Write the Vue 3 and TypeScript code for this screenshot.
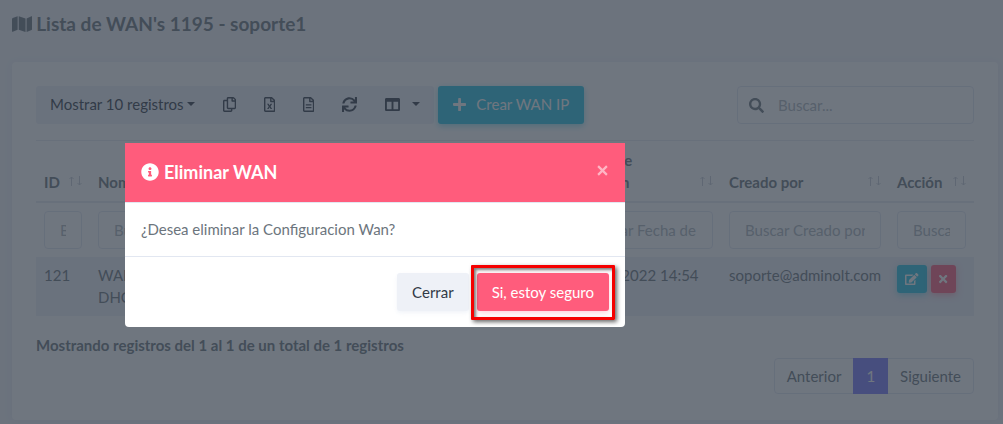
<script setup lang="ts">
import { ref } from 'vue'

interface Column {
  key: string
  label: string
  placeholder: string
}

const columns: Column[] = [
  { key: 'id', label: 'ID', placeholder: 'Buscar ID' },
  { key: 'name', label: 'Nombre', placeholder: 'Buscar Nombre' },
  { key: 'date', label: 'Fecha de creación', placeholder: 'Buscar Fecha de' },
  { key: 'author', label: 'Creado por', placeholder: 'Buscar Creado por' },
  { key: 'action', label: 'Acción', placeholder: 'Buscar Acción' },
]

const search = ref('')
const open = ref(true)

const filePath =
  'M369.9 97.9L286 14C277 5 264.8-.1 252.1-.1H48C21.5 0 0 21.5 0 48v416c0 26.5 21.5 48 48 48h288c26.5 0 48-21.5 48-48V131.9c0-12.7-5.1-25-14.1-34zM332.1 128H256V51.9l76.1 76.1zM48 464V48h160v104c0 13.3 10.7 24 24 24h104v288H48z'
const timesPath =
  'M242.72 256l100.07-100.07c12.28-12.28 12.28-32.19 0-44.48l-22.24-22.24c-12.28-12.28-32.19-12.28-44.48 0L176 189.28 75.93 89.21c-12.28-12.28-32.19-12.28-44.48 0L9.21 111.45c-12.28 12.28-12.28 32.19 0 44.48L109.28 256 9.21 356.07c-12.28 12.28-12.28 32.19 0 44.48l22.24 22.24c12.28 12.28 32.2 12.28 44.48 0L176 322.72l100.07 100.07c12.28 12.28 32.2 12.28 44.48 0l22.24-22.24c12.28-12.28 12.28-32.19 0-44.48L242.72 256z'
</script>

<template>
  <div class="page">
    <main class="content">
      <h1 class="title">
        <svg class="i18" viewBox="0 0 576 512" aria-hidden="true"><path d="M0 117.66v346.32c0 11.32 11.43 19.06 21.94 14.86L160 416V32L20.12 87.95A32.006 32.006 0 0 0 0 117.66zM192 416l192 64V96L192 32v384zM554.06 33.16L416 96v384l139.88-55.95A31.996 31.996 0 0 0 576 394.34V48.02c0-11.32-11.43-19.06-21.94-14.86z" /></svg>
        Lista de WAN's 1195 - soporte1
      </h1>

      <section class="card">
        <div class="toolbar">
          <div class="group">
            <button type="button" class="tool">Mostrar 10 registros<span class="caret"></span></button>
            <button type="button" class="tool" aria-label="Copiar">
              <svg class="i15" viewBox="0 0 448 512"><path d="M433.941 65.941l-51.882-51.882A48 48 0 0 0 348.118 0H176c-26.51 0-48 21.49-48 48v48H48c-26.51 0-48 21.49-48 48v320c0 26.51 21.49 48 48 48h224c26.51 0 48-21.49 48-48v-48h80c26.51 0 48-21.49 48-48V99.882a48 48 0 0 0-14.059-33.941zM266 464H54a6 6 0 0 1-6-6V150a6 6 0 0 1 6-6h74v224c0 26.51 21.49 48 48 48h96v42a6 6 0 0 1-6 6zm128-96H182a6 6 0 0 1-6-6V54a6 6 0 0 1 6-6h106v88c0 13.255 10.745 24 24 24h88v202a6 6 0 0 1-6 6zm6-256h-64V48h9.632c1.591 0 3.117.632 4.243 1.757l48.368 48.368a6 6 0 0 1 1.757 4.243V112z" /></svg>
            </button>
            <button type="button" class="tool" aria-label="Exportar a Excel">
              <svg class="i15" viewBox="0 0 384 512"><path :d="filePath" /><path d="M104 232h56l32 56 32-56h56l-58 88 58 88h-56l-32-56-32 56h-56l58-88z" /></svg>
            </button>
            <button type="button" class="tool" aria-label="Exportar a CSV">
              <svg class="i15" viewBox="0 0 384 512"><path :d="filePath" /><path d="M96 248h192v40H96zM96 344h192v40H96z" /></svg>
            </button>
            <button type="button" class="tool" aria-label="Recargar">
              <svg class="i15" viewBox="0 0 512 512"><path d="M440.65 12.57l4 82.77A247.16 247.16 0 0 0 255.83 8C134.73 8 33.91 94.92 12.29 209.82A12 12 0 0 0 24.09 224h49.05a12 12 0 0 0 11.67-9.26 175.91 175.91 0 0 1 317-56.94l-101.46-4.86a12 12 0 0 0-12.57 12v47.41a12 12 0 0 0 12 12H500a12 12 0 0 0 12-12V12a12 12 0 0 0-12-12h-47.37a12 12 0 0 0-11.98 12.57zM255.83 432a175.61 175.61 0 0 1-146-77.8l101.8 4.87a12 12 0 0 0 12.57-12v-47.4a12 12 0 0 0-12-12H12a12 12 0 0 0-12 12V500a12 12 0 0 0 12 12h47.35a12 12 0 0 0 12-12.6l-4.15-82.57A247.17 247.17 0 0 0 255.83 504c121.11 0 221.93-86.92 243.55-201.82a12 12 0 0 0-11.8-14.18h-49.05a12 12 0 0 0-11.67 9.26A175.86 175.86 0 0 1 255.83 432z" /></svg>
            </button>
            <button type="button" class="tool wide" aria-label="Columnas">
              <svg class="i15" viewBox="0 0 512 512"><path d="M464 32H48C21.49 32 0 53.49 0 80v352c0 26.51 21.49 48 48 48h416c26.51 0 48-21.49 48-48V80c0-26.51-21.49-48-48-48zM224 416H64V160h160v256zm224 0H288V160h160v256z" /></svg>
              <span class="caret"></span>
            </button>
          </div>
          <button type="button" class="create">
            <svg class="i15" viewBox="0 0 448 512"><path d="M416 208H272V64c0-17.67-14.33-32-32-32h-32c-17.67 0-32 14.33-32 32v144H32c-17.67 0-32 14.33-32 32v32c0 17.67 14.33 32 32 32h144v144c0 17.67 14.33 32 32 32h32c17.67 0 32-14.33 32-32V304h144c17.67 0 32-14.33 32-32v-32c0-17.67-14.33-32-32-32z" /></svg>
            Crear WAN IP
          </button>
          <label class="search">
            <svg class="i15" viewBox="0 0 512 512" aria-hidden="true"><path d="M505 442.7L405.3 343c-4.5-4.5-10.6-7-17-7H372c27.6-35.3 44-79.7 44-128C416 93.1 322.9 0 208 0S0 93.1 0 208s93.1 208 208 208c48.3 0 92.7-16.4 128-44v16.3c0 6.4 2.5 12.5 7 17l99.7 99.7c9.4 9.4 24.6 9.4 33.9 0l28.3-28.3c9.4-9.4 9.4-24.6.1-34zM208 336c-70.7 0-128-57.2-128-128 0-70.7 57.2-128 128-128 70.7 0 128 57.2 128 128 0 70.7-57.2 128-128 128z" /></svg>
            <input v-model="search" type="text" placeholder="Buscar..." aria-label="Buscar" />
          </label>
        </div>

        <table class="grid">
          <colgroup>
            <col v-for="c in columns" :key="c.key" :class="'col-' + c.key" />
          </colgroup>
          <thead>
            <tr class="heads">
              <th v-for="c in columns" :key="c.key" scope="col">
                <div class="head">
                  <span :class="'label-' + c.key">{{ c.label }}</span>
                  <svg class="sort" viewBox="0 0 14 10" aria-hidden="true"><path d="M3.5 10V1M1.5 3l2-2 2 2M11.5 0v9M9.5 7l2 2 2-2" /></svg>
                </div>
              </th>
            </tr>
            <tr class="filters">
              <td v-for="c in columns" :key="c.key">
                <input type="text" :placeholder="c.placeholder" :aria-label="c.placeholder" />
              </td>
            </tr>
          </thead>
          <tbody>
            <tr>
              <td>121</td>
              <td><div class="name">WAN DHCP</div></td>
              <td>17/03/2022 14:54</td>
              <td>soporte@adminolt.com</td>
              <td>
                <div class="actions">
                  <button type="button" class="edit" aria-label="Editar">
                    <svg class="i12" viewBox="0 0 576 512"><path d="M402.6 83.2l90.2 90.2c3.8 3.8 3.8 10 0 13.8L274.4 405.6l-92.8 10.3c-12.4 1.4-22.9-9.1-21.5-21.5l10.3-92.8L388.8 83.2c3.8-3.8 10-3.8 13.8 0zm162-22.9l-48.8-48.8c-15.2-15.2-39.9-15.2-55.2 0l-35.4 35.4c-3.8 3.8-3.8 10 0 13.8l90.2 90.2c3.8 3.8 10 3.8 13.8 0l35.4-35.4c15.2-15.3 15.2-40 0-55.2zM384 346.2V448H64V128h229.8c3.2 0 6.2-1.3 8.5-3.5l40-40c7.6-7.6 2.2-20.5-8.5-20.5H48C21.5 64 0 85.5 0 112v352c0 26.5 21.5 48 48 48h352c26.5 0 48-21.5 48-48V306.2c0-10.7-12.9-16-20.5-8.5l-40 40c-2.2 2.3-3.5 5.3-3.5 8.5z" /></svg>
                  </button>
                  <button type="button" class="delete" aria-label="Eliminar">
                    <svg class="i12" viewBox="0 0 352 512"><path :d="timesPath" /></svg>
                  </button>
                </div>
              </td>
            </tr>
          </tbody>
        </table>

        <p class="info">Mostrando registros del 1 al 1 de un total de 1 registros</p>
        <nav class="pager" aria-label="Paginación">
          <a href="#">Anterior</a>
          <a href="#" class="current" aria-current="page">1</a>
          <a href="#">Siguiente</a>
        </nav>
      </section>
    </main>

    <div v-if="open" class="backdrop">
      <div class="modal" role="dialog" aria-modal="true" aria-labelledby="modal-title">
        <header class="modal-head">
          <svg class="i18" viewBox="0 0 512 512" aria-hidden="true"><path d="M256 8C119.043 8 8 119.083 8 256c0 136.997 111.043 248 248 248s248-111.003 248-248C504 119.083 392.957 8 256 8zm0 110c23.196 0 42 18.804 42 42s-18.804 42-42 42-42-18.804-42-42 18.804-42 42-42zm56 254c0 6.627-5.373 12-12 12h-88c-6.627 0-12-5.373-12-12v-24c0-6.627 5.373-12 12-12h12v-64h-12c-6.627 0-12-5.373-12-12v-24c0-6.627 5.373-12 12-12h64c6.627 0 12 5.373 12 12v100h12c6.627 0 12 5.373 12 12v24z" /></svg>
          <h2 id="modal-title">Eliminar WAN</h2>
          <button type="button" class="close" aria-label="Cerrar ventana" @click="open = false">
            <svg viewBox="0 0 10 10"><path d="M1 1l8 8M9 1L1 9" /></svg>
          </button>
        </header>
        <p class="modal-body">¿Desea eliminar la Configuracion Wan?</p>
        <footer class="modal-foot">
          <button type="button" class="cancel" @click="open = false">Cerrar</button>
          <button type="button" class="confirm">Si, estoy seguro</button>
        </footer>
      </div>
    </div>
  </div>
</template>

<style>
body {
  margin: 0;
}
</style>

<style scoped>
.page,
.page * {
  box-sizing: border-box;
}
.page {
  position: relative;
  min-height: 100vh;
  padding: 0 5px 4px 12px;
  background: #f3f4f9;
  color: #6c757d;
  font: 15px/22px Lato, 'Open Sans', sans-serif;
}
button,
input {
  font: inherit;
  color: inherit;
}
button {
  border: 0;
  padding: 0;
  background: none;
  cursor: pointer;
}
svg {
  display: block;
  flex: none;
  fill: currentColor;
}
.i15 {
  height: 15px;
}
.i12 {
  height: 12px;
}
.i18 {
  height: 18px;
}
.title {
  display: flex;
  align-items: center;
  gap: 4px;
  height: 62px;
  margin: 0;
  padding-bottom: 14px;
  font-size: 19px;
  font-weight: 700;
}
.card {
  padding: 24px 24px 26px;
  border-radius: 4px;
  background: #fff;
  box-shadow: 0 1px 10px rgba(60, 70, 130, 0.06);
}
.toolbar {
  display: flex;
  align-items: center;
  gap: 4px;
  margin-bottom: 16px;
}
.group {
  display: flex;
  height: 38px;
  border-radius: 3px;
  background: #eef0f8;
  color: #323a46;
}
.tool {
  display: flex;
  align-items: center;
  padding: 0 14px 2px;
}
.wide {
  gap: 9px;
}
.caret {
  margin-left: 3px;
  border: 4px solid transparent;
  border-top-color: currentColor;
  border-bottom: 0;
}
.create {
  display: flex;
  align-items: center;
  gap: 10px;
  height: 38px;
  padding: 0 15px 2px;
  border-radius: 3px;
  background: #25c2e3;
  color: #fff;
  box-shadow: 0 2px 6px rgba(37, 194, 227, 0.5);
}
.search {
  display: flex;
  align-items: center;
  gap: 14px;
  width: 237px;
  height: 38px;
  margin-left: auto;
  padding: 0 11px;
  border: 1px solid #e2e7f1;
  border-radius: 4px;
}
.search input {
  flex: 1;
  min-width: 0;
  padding: 0;
  border: 0;
  background: none;
  outline: 0;
}
input::placeholder {
  color: #adb5bd;
  opacity: 1;
}
.grid {
  width: 100%;
  table-layout: fixed;
  border-collapse: separate;
  border-spacing: 0;
}
.col-id {
  width: 54px;
}
.col-date {
  width: 156px;
}
.col-author {
  width: 168px;
}
.col-action {
  width: 85px;
}
th,
td {
  padding: 8px;
  text-align: left;
  vertical-align: top;
}
th {
  height: 63px;
  border-top: 1px solid #e6e9f2;
  border-bottom: 2px solid #e6e9f2;
  vertical-align: bottom;
}
.head {
  display: flex;
  align-items: flex-end;
  justify-content: space-between;
}
.label-date {
  max-width: 80px;
}
.sort {
  width: 14px;
  height: 10px;
  margin-bottom: 7px;
  fill: none;
  stroke: #c8cdd6;
}
.name {
  max-width: 74px;
}
.filters input {
  display: block;
  width: 100%;
  height: 38px;
  padding: 0 15px;
  border: 1px solid #e2e7f1;
  border-radius: 4px;
  background: none;
}
tbody td {
  height: 59px;
  padding-top: 7px;
  background: #eef0f8;
}
.actions {
  display: flex;
  gap: 4px;
  padding-top: 1px;
}
.edit,
.delete {
  display: flex;
  align-items: center;
  justify-content: center;
  height: 28px;
  border-radius: 3px;
  color: #fff;
}
.edit {
  width: 30px;
  background: #25c2e3;
  box-shadow: 0 2px 6px rgba(37, 194, 227, 0.5);
}
.delete {
  width: 25px;
  background: #ff5c7c;
  box-shadow: 0 2px 6px rgba(255, 92, 124, 0.5);
}
.info {
  margin: 18px 0 2px;
  font-weight: 700;
}
.pager {
  display: flex;
  width: max-content;
  height: 36px;
  margin-left: auto;
  border: 1px solid #e2e7f1;
  border-radius: 4px;
}
.pager a {
  padding: 6px 12px;
  color: inherit;
  text-decoration: none;
}
.pager .current {
  margin: -1px 0;
  padding: 7px 13px;
  background: #7b7bfa;
  color: #fff;
}
.backdrop {
  position: absolute;
  inset: 0;
  padding: 143px 125px 0;
  background: rgba(50, 60, 72, 0.7);
}
.modal {
  max-width: 500px;
  border-radius: 4px;
  background: #fff;
}
.modal-head {
  display: flex;
  align-items: center;
  gap: 5px;
  height: 60px;
  padding: 0 16px 2px;
  border-bottom: 1px solid #e2e7f1;
  background: #ff5c7c;
  color: #fff;
}
.modal-head h2 {
  margin: 0;
  font-size: 18px;
  line-height: 26px;
}
.close {
  display: flex;
  margin-left: auto;
  padding: 0 1px 2px;
  opacity: 0.55;
}
.close svg {
  width: 11px;
  height: 11px;
  fill: none;
  stroke: currentColor;
  stroke-width: 2;
}
.modal-body {
  margin: 0;
  padding: 15px 16px 16px;
}
.modal-foot {
  display: flex;
  justify-content: flex-end;
  gap: 8px;
  padding: 16px;
  border-top: 1px solid #e2e7f1;
}
.cancel,
.confirm {
  position: relative;
  height: 38px;
  padding: 0 15px;
  border-radius: 3px;
}
.cancel {
  background: #eef1f7;
  color: #323a46;
  box-shadow: 0 2px 4px rgba(238, 241, 247, 0.8);
}
.confirm {
  background: #ff5c7c;
  color: #fff;
  box-shadow: 0 2px 6px rgba(255, 92, 124, 0.3);
}
.confirm::after {
  content: '';
  position: absolute;
  inset: -8px -6px -9px;
  border: 3px solid #f50000;
  border-radius: 1px;
  box-shadow: 2px 2px 4px rgba(0, 0, 0, 0.6), inset 2px 2px 3px rgba(0, 0, 0, 0.5);
}
</style>
